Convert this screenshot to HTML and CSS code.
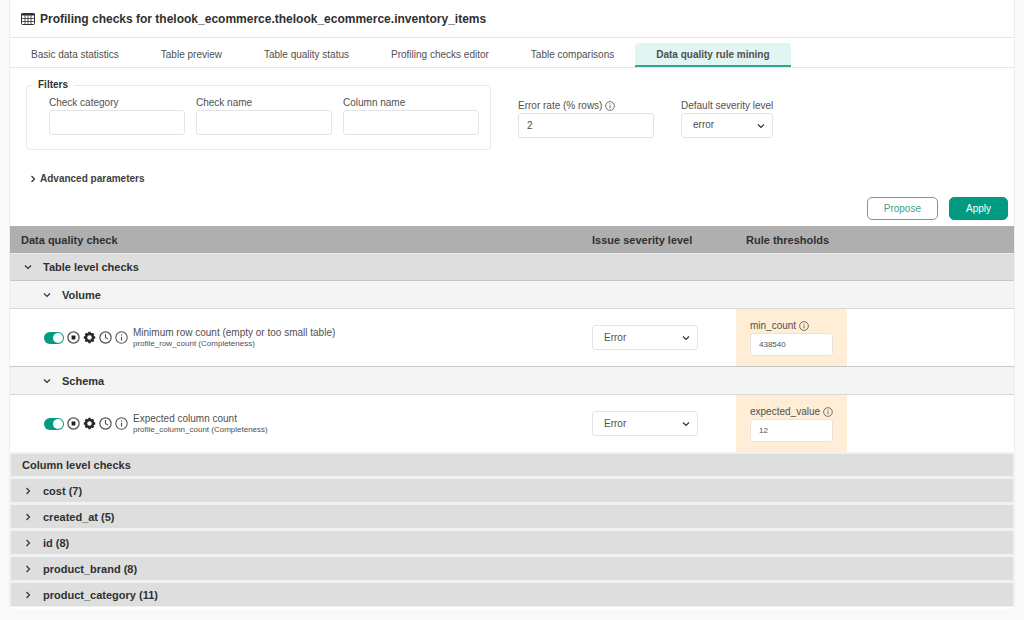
FILE: index.html
```html
<!DOCTYPE html>
<html lang="en">

<head>
  <meta charset="UTF-8">
  <meta name="viewport" content="width=device-width, initial-scale=1.0">
  <title>Data quality rule mining</title>
  <link rel="stylesheet" href="styles.css">
</head>

<body>
  <!-- shared icons -->
  <svg class="sprite" aria-hidden="true">
    <symbol id="chevron" viewBox="0 0 10 10">
      <path d="M2 3.5 5 6.5 8 3.5" fill="none" stroke="currentColor" stroke-width="1.2" />
    </symbol>
    <symbol id="info" viewBox="0 0 24 24">
      <circle cx="12" cy="12" r="10.5" fill="none" stroke="currentColor" stroke-width="1.9" />
      <path d="M12 10.5v7M12 6v2.5" fill="none" stroke="currentColor" stroke-width="2" />
    </symbol>
    <symbol id="stop" viewBox="0 0 24 24">
      <circle cx="12" cy="12" r="10.3" fill="none" stroke="currentColor" stroke-width="2.4" />
      <rect x="8.5" y="8.5" width="7" height="7" rx="1" fill="#202020" />
    </symbol>
    <symbol id="gear" viewBox="0 0 24 24">
      <g fill="none" stroke="currentColor">
        <circle cx="12" cy="12" r="6.5" stroke-width="4.6" />
        <path d="M12 1.5v4M12 18.5v4M1.5 12h4M18.5 12h4M4.6 4.6l3 3M16.4 16.4l3 3M4.6 19.4l3-3M16.4 7.6l3-3" stroke-width="4.5" />
      </g>
    </symbol>
    <symbol id="clock" viewBox="0 0 24 24">
      <circle cx="12" cy="12" r="10.4" fill="none" stroke="currentColor" stroke-width="2.2" />
      <path d="M12 5.5v7l5 2.5" fill="none" stroke="currentColor" stroke-width="2" />
    </symbol>
  </svg>

  <main class="card">
    <header class="titleBar">
      <svg class="tableIcon" viewBox="0 0 14 12" aria-hidden="true">
        <rect x="0.5" y="0.5" width="13" height="11" rx="1" fill="none" stroke="currentColor" />
        <path d="M0 1.5h14" stroke="currentColor" stroke-width="2" />
        <path d="M0 5.5h14M0 8.5h14M4 2v10M7 2v10M10 2v10" stroke="currentColor" stroke-width="0.8" />
      </svg>
      <h1>Profiling checks for thelook_ecommerce.thelook_ecommerce.inventory_items</h1>
    </header>

    <nav class="tabs">
      <a href="#" class="tab">Basic data statistics</a>
      <a href="#" class="tab">Table preview</a>
      <a href="#" class="tab">Table quality status</a>
      <a href="#" class="tab">Profiling checks editor</a>
      <a href="#" class="tab">Table comparisons</a>
      <a href="#" class="tab active" aria-current="page">Data quality rule mining</a>
    </nav>

    <form class="params">
      <div class="paramRow">
        <fieldset class="filters">
          <legend>Filters</legend>
          <div class="filterFields">
            <div class="field">
              <label for="category">Check category</label>
              <input type="text" id="category">
            </div>
            <div class="field">
              <label for="checkName">Check name</label>
              <input type="text" id="checkName">
            </div>
            <div class="field">
              <label for="columnName">Column name</label>
              <input type="text" id="columnName">
            </div>
          </div>
        </fieldset>
        <div class="field">
          <label for="errorRate">Error rate (% rows) <svg class="infoIcon"><use href="#info" /></svg></label>
          <input type="text" id="errorRate" value="2">
        </div>
        <div class="field">
          <label for="severity">Default severity level</label>
          <div class="select">
            <select id="severity">
              <option>error</option>
            </select>
            <svg class="chevron"><use href="#chevron" /></svg>
          </div>
        </div>
      </div>

      <button type="button" class="toggle advanced" aria-expanded="false">
        <svg class="chevron right"><use href="#chevron" /></svg>Advanced parameters
      </button>

      <div class="actions">
        <button type="button" class="btn outline">Propose</button>
        <button type="button" class="btn">Apply</button>
      </div>
    </form>

    <table class="checks">
      <thead>
        <tr>
          <th scope="col">Data quality check</th>
          <th scope="col" class="severityCol">Issue severity level</th>
          <th scope="col" class="ruleCol">Rule thresholds</th>
        </tr>
      </thead>
      <tbody>
        <tr class="level">
          <th colspan="3">
            <button type="button" class="toggle" aria-expanded="true"><svg class="chevron"><use href="#chevron" /></svg>Table level checks</button>
          </th>
        </tr>
        <tr class="category">
          <th colspan="3">
            <button type="button" class="toggle" aria-expanded="true"><svg class="chevron"><use href="#chevron" /></svg>Volume</button>
          </th>
        </tr>
        <tr class="check">
          <td>
            <div class="checkInfo">
              <input type="checkbox" class="switch" aria-label="Enable minimum row count" checked>
              <button type="button" class="iconBtn" aria-label="Disable"><svg><use href="#stop" /></svg></button>
              <button type="button" class="iconBtn dark" aria-label="Settings"><svg><use href="#gear" /></svg></button>
              <button type="button" class="iconBtn" aria-label="Schedule"><svg><use href="#clock" /></svg></button>
              <button type="button" class="iconBtn" aria-label="Details"><svg><use href="#info" /></svg></button>
              <div class="checkText">
                <p class="checkName">Minimum row count (empty or too small table)</p>
                <p class="checkCode">profile_row_count (Completeness)</p>
              </div>
            </div>
          </td>
          <td>
            <div class="select">
              <select aria-label="Minimum row count severity">
                <option>Error</option>
              </select>
              <svg class="chevron"><use href="#chevron" /></svg>
            </div>
          </td>
          <td class="ruleCell">
            <div class="rule">
              <label for="minCount">min_count <svg class="infoIcon"><use href="#info" /></svg></label>
              <input type="text" id="minCount" value="438540">
            </div>
          </td>
        </tr>
        <tr class="category">
          <th colspan="3">
            <button type="button" class="toggle" aria-expanded="true"><svg class="chevron"><use href="#chevron" /></svg>Schema</button>
          </th>
        </tr>
        <tr class="check">
          <td>
            <div class="checkInfo">
              <input type="checkbox" class="switch" aria-label="Enable expected column count" checked>
              <button type="button" class="iconBtn" aria-label="Disable"><svg><use href="#stop" /></svg></button>
              <button type="button" class="iconBtn dark" aria-label="Settings"><svg><use href="#gear" /></svg></button>
              <button type="button" class="iconBtn" aria-label="Schedule"><svg><use href="#clock" /></svg></button>
              <button type="button" class="iconBtn" aria-label="Details"><svg><use href="#info" /></svg></button>
              <div class="checkText">
                <p class="checkName">Expected column count</p>
                <p class="checkCode">profile_column_count (Completeness)</p>
              </div>
            </div>
          </td>
          <td>
            <div class="select">
              <select aria-label="Expected column count severity">
                <option>Error</option>
              </select>
              <svg class="chevron"><use href="#chevron" /></svg>
            </div>
          </td>
          <td class="ruleCell">
            <div class="rule">
              <label for="expectedValue">expected_value <svg class="infoIcon"><use href="#info" /></svg></label>
              <input type="text" id="expectedValue" value="12">
            </div>
          </td>
        </tr>
      </tbody>
      <tbody class="columns">
        <tr>
          <th colspan="3" class="columnsTitle">Column level checks</th>
        </tr>
        <tr>
          <th colspan="3"><button type="button" class="toggle" aria-expanded="false"><svg class="chevron right"><use href="#chevron" /></svg>cost (7)</button></th>
        </tr>
        <tr>
          <th colspan="3"><button type="button" class="toggle" aria-expanded="false"><svg class="chevron right"><use href="#chevron" /></svg>created_at (5)</button></th>
        </tr>
        <tr>
          <th colspan="3"><button type="button" class="toggle" aria-expanded="false"><svg class="chevron right"><use href="#chevron" /></svg>id (8)</button></th>
        </tr>
        <tr>
          <th colspan="3"><button type="button" class="toggle" aria-expanded="false"><svg class="chevron right"><use href="#chevron" /></svg>product_brand (8)</button></th>
        </tr>
        <tr>
          <th colspan="3"><button type="button" class="toggle" aria-expanded="false"><svg class="chevron right"><use href="#chevron" /></svg>product_category (11)</button></th>
        </tr>
      </tbody>
    </table>
  </main>
</body>

</html>
```

FILE: styles.css
```css
* {
  box-sizing: border-box;
}

body {
  margin: 0;
  padding: 0 10px;
  background-color: #f9fafc;
  color: #505050;
  font-family: "Liberation Sans", Arial, sans-serif;
  font-size: 10px;
  line-height: 12px;
}

input,
select,
button {
  font: inherit;
  color: inherit;
}

.sprite {
  display: none;
}

.card {
  padding-bottom: 2px;
  background-color: white;
  box-shadow: 0 0 0 1px #eceeef;
}

.titleBar {
  display: flex;
  align-items: center;
  gap: 5px;
  height: 38px;
  padding-left: 11px;
  border-bottom: 1px solid #e6e6e6;
  color: #303030;
}

.titleBar h1 {
  margin: 0;
  font-size: 12px;
}

.tableIcon {
  width: 14px;
  height: 12px;
}

/* Tabs */
.tabs {
  display: flex;
  height: 30px;
  padding-top: 5px;
  border-bottom: 1px solid #e6e6e6;
}

.tab {
  padding: 6px 21px;
  color: inherit;
  text-decoration: none;
  white-space: nowrap;
}

.tab.active {
  background-color: #e1f5f2;
  border-bottom: 2px solid #2aa893;
  border-radius: 4px 4px 0 0;
  font-weight: bold;
}

/* Parameters */
.params {
  padding: 11px 6px 6px 16px;
}

.paramRow {
  display: flex;
  align-items: center;
  gap: 27px;
}

.paramRow > .field {
  margin-top: 8px;
}

.filters {
  margin: 0;
  padding: 6px 11px 14px 22px;
  border: 1px solid #e8e8e8;
  border-radius: 4px;
}

.filters legend {
  margin-left: -17px;
  padding: 0 6px;
  color: #303030;
  font-weight: bold;
}

.filterFields {
  display: flex;
  gap: 11px;
}

.field label,
.rule label {
  display: flex;
  align-items: center;
  gap: 3px;
  margin-bottom: 1px;
}

.infoIcon {
  width: 10px;
  height: 10px;
}

.field input {
  display: block;
  width: 136px;
  height: 25px;
  padding: 0 8px;
  border: 1px solid #e4e4e4;
  border-radius: 3px;
}

.select {
  position: relative;
}

.select select {
  display: block;
  width: 100%;
  height: 25px;
  padding: 0 11px;
  border: 1px solid #e4e4e4;
  border-radius: 3px;
  background-color: white;
  appearance: none;
}

.select .chevron {
  position: absolute;
  top: 8px;
  right: 7px;
}

.chevron {
  flex: none;
  width: 10px;
  height: 10px;
  color: #303030;
}

.chevron.right {
  transform: rotate(-90deg);
}

.toggle {
  display: flex;
  align-items: center;
  gap: 10px;
  padding: 0;
  border: none;
  background: none;
  font-weight: bold;
  cursor: pointer;
}

.advanced {
  gap: 2px;
  margin-top: 23px;
  padding-left: 2px;
  color: #404040;
}

.actions {
  display: flex;
  justify-content: flex-end;
  gap: 11px;
  margin-top: 12px;
}

.btn {
  height: 23px;
  padding: 0 16px;
  border: 1px solid #029a80;
  border-radius: 5px;
  background-color: #029a80;
  color: white;
  cursor: pointer;
}

.btn.outline {
  border-color: #4db09f;
  background-color: white;
  color: #3aa18d;
}

/* Checks table */
.checks {
  width: 100%;
  table-layout: fixed;
  border-collapse: separate;
  border-spacing: 0;
}

.checks th {
  padding: 0 11px;
  font-size: 11px;
  text-align: left;
}

.checks td {
  height: 57px;
  padding: 0 10px;
}

.checks thead th {
  height: 27px;
  background-color: #afafaf;
  color: #303030;
}

.checks .severityCol {
  width: 154px;
  padding: 0 10px;
}

.checks .ruleCol {
  width: 278px;
  padding: 0 10px;
}

.level th {
  height: 28px;
  border-top: 1px solid #ececec;
  border-bottom: 1px solid #c4c8cc;
  background-color: #dedede;
}

.checks .toggle,
.columnsTitle {
  color: #303030;
}

.level .toggle {
  margin-left: 2px;
}

.category th {
  height: 28px;
  padding-left: 32px;
  border-bottom: 1px solid #d6d9dc;
  background-color: #f4f4f4;
}

.check + .category th {
  height: 29px;
  border-top: 1px solid #c4c8cc;
}

.checkInfo {
  display: flex;
  align-items: center;
  gap: 3px;
  padding-left: 24px;
}

.switch {
  display: flex;
  width: 20px;
  height: 12px;
  margin: 0;
  padding: 1px;
  border-radius: 6px;
  background-color: #b5b5b5;
  appearance: none;
}

.switch::before {
  content: "";
  width: 10px;
  height: 10px;
  border-radius: 50%;
  background-color: white;
}

.switch:checked {
  justify-content: flex-end;
  background-color: #029a80;
}

.iconBtn {
  padding: 0;
  border: none;
  background: none;
  cursor: pointer;
}

.iconBtn svg {
  display: block;
  width: 13px;
  height: 13px;
}

.iconBtn.dark {
  color: #282828;
}

.checkText {
  padding-left: 2px;
}

.checkText p {
  margin: 0;
}

.checkCode {
  font-size: 8px;
  line-height: 10px;
}

.check .select {
  width: 106px;
}

.checks .ruleCell {
  padding: 0;
}

.rule {
  width: 111px;
  height: 57px;
  padding: 11px 14px;
  background-color: #ffedd5;
}

.rule input {
  display: block;
  width: 100%;
  height: 23px;
  padding: 0 8px;
  border: 1px solid #e8e3dc;
  border-radius: 3px;
  font-size: 8px;
}

.columns th {
  height: 26px;
  border: 1px solid #f0f1f1;
  border-top-width: 2px;
  background-color: #dedede;
}

.columns .columnsTitle {
  height: 25px;
}

.columns .toggle {
  margin-left: 1px;
}
```
